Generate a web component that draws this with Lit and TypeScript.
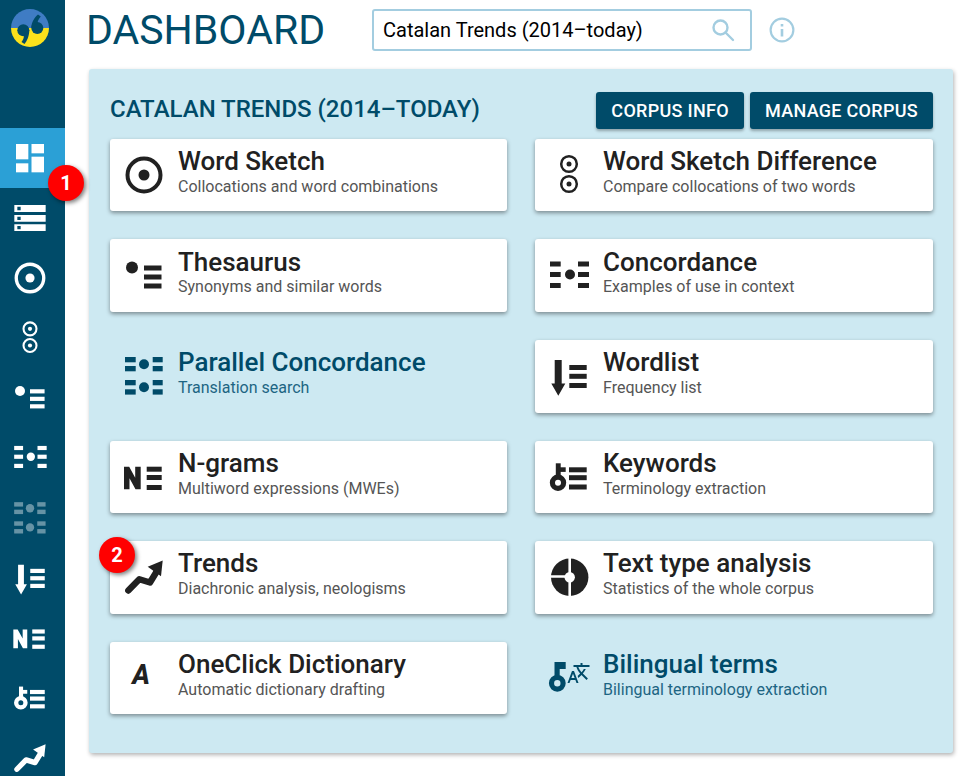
import { LitElement, css, html, svg } from 'lit'
import { customElement } from 'lit/decorators.js'

// icons are all drawn on a 48 box, card size 48px, sidebar 40px
const bars = (x: number, w: number, ys: number[], h = 5) =>
  ys.map((y) => svg`<rect x=${x} y=${y} width=${w} height=${h}></rect>`)

const key = svg`
  <circle cx="13" cy="29.7" r="5.6" fill="none" stroke="currentColor" stroke-width="5.2"></circle>
  <rect x="10.8" y="10.3" width="4.9" height="15"></rect>
  <rect x="15" y="14.3" width="5.7" height="4.6"></rect>`

const ICONS: Record<string, unknown> = {
  dashboard: svg`
    <rect x="7.2" y="7.2" width="14.8" height="18.4"></rect>
    <rect x="25.8" y="7.2" width="15" height="11.2"></rect>
    <rect x="7.2" y="30.4" width="14.8" height="10.8"></rect>
    <rect x="25.8" y="22.4" width="15" height="18.8"></rect>`,
  corpus: svg`
    <path fill-rule="evenodd" d="M5.2 8.4h37.6v8.4H5.2zM8.8 10.6v4h4v-4zM5.2 20.4h37.6v8H5.2zM8.8 22.4v4h4v-4zM5.2 31.6h37.6v8H5.2zM8.8 33.6v4h4v-4z"></path>`,
  wordsketch: svg`
    <circle cx="24" cy="24" r="16.5" fill="none" stroke="currentColor" stroke-width="4"></circle>
    <circle cx="24" cy="24" r="5.5"></circle>`,
  wsdiff: svg`
    <circle cx="24" cy="13" r="7.8" fill="none" stroke="currentColor" stroke-width="2.5"></circle>
    <circle cx="24" cy="13" r="2.5"></circle>
    <circle cx="24" cy="33" r="7.8" fill="none" stroke="currentColor" stroke-width="2.5"></circle>
    <circle cx="24" cy="33" r="2.5"></circle>`,
  thesaurus: svg`
    <circle cx="12" cy="15.5" r="6"></circle>
    ${bars(24, 17.5, [13.5, 22.5, 31.5])}`,
  concordance: svg`
    ${bars(5, 10.7, [9.5, 20, 31])}
    <circle cx="25" cy="22.5" r="5"></circle>
    ${bars(33, 11, [9.5, 20, 31])}`,
  parallel: svg`
    ${bars(5, 10.7, [5, 14, 28, 37.3], 5.3)}
    <circle cx="24" cy="12.3" r="5"></circle>
    <circle cx="24" cy="35.3" r="5"></circle>
    ${bars(32.7, 10, [5, 14, 28, 37.3], 5.3)}`,
  wordlist: svg`
    <path d="M9.7 8h7v23.5h3.6l-7 12.2-7-12.2h3.4z"></path>
    ${bars(24.3, 17.4, [13, 21.8, 31])}`,
  ngrams: svg`
    <path d="M4 13.7h5.2l6 11v-11h5.5v22.6h-5.2l-6-11v11H4z"></path>
    ${bars(26.7, 15, [13.7, 22, 32])}`,
  keywords: svg`
    ${key}
    ${bars(24, 17.7, [14.3, 22.2, 31.5], 5)}`,
  trends: svg`
    <path d="M8.3 37.5 19.3 26.3 30 29.5 37 18" fill="none" stroke="currentColor" stroke-width="6.4" stroke-linecap="round" stroke-linejoin="round"></path>
    <path d="M27.7 13.8 42.7 7.5 41 23.2z"></path>`,
  texttype: svg`
    <circle cx="24.7" cy="24.2" r="18.7"></circle>
    <path d="M24.7 4v40.5M5 23.5h17" fill="none" stroke="#fff" stroke-width="2.6"></path>
    <circle cx="24.7" cy="24.2" r="5.2" fill="#fff"></circle>`,
  oneclick: svg`<text x="21" y="30" text-anchor="middle" font-family="Roboto" font-size="27" font-weight="800" font-style="italic">A</text>`,
  bilingual: svg`
    <circle cx="12.3" cy="29.3" r="5.8" fill="none" stroke="currentColor" stroke-width="5.2"></circle>
    <rect x="9.5" y="8" width="5.2" height="17"></rect>
    <rect x="14" y="8" width="6.7" height="7"></rect>
    <g transform="translate(45.5 7) scale(-1 1)"><path d="M12.87 15.07l-2.54-2.51.03-.03c1.74-1.94 2.98-4.17 3.71-6.53H17V4h-7V2H8v2H1v1.99h11.17C11.5 7.92 10.44 9.75 9 11.35 8.07 10.32 7.3 9.19 6.69 8h-2c.73 1.63 1.73 3.17 2.98 4.56l-5.09 5.02L4 19l5-5 3.11 3.11.76-2.04zM18.5 10h-2L12 22h2l1.12-3h4.75L21 22h2l-4.5-12zm-2.62 7l1.62-4.33L19.12 17h-3.24z"></path></g>`,
}

const icon = (name: string) =>
  html`<svg class="icon" viewBox="0 0 48 48" fill="currentColor">${ICONS[name]}</svg>`

const SIDE = ['dashboard', 'corpus', 'wordsketch', 'wsdiff', 'thesaurus', 'concordance', 'parallel', 'wordlist', 'ngrams', 'keywords', 'trends']

const CARDS = [
  { icon: 'wordsketch', title: 'Word Sketch', sub: 'Collocations and word combinations' },
  { icon: 'wsdiff', title: 'Word Sketch Difference', sub: 'Compare collocations of two words' },
  { icon: 'thesaurus', title: 'Thesaurus', sub: 'Synonyms and similar words' },
  { icon: 'concordance', title: 'Concordance', sub: 'Examples of use in context' },
  { icon: 'parallel', title: 'Parallel Concordance', sub: 'Translation search', off: true },
  { icon: 'wordlist', title: 'Wordlist', sub: 'Frequency list' },
  { icon: 'ngrams', title: 'N-grams', sub: 'Multiword expressions (MWEs)' },
  { icon: 'keywords', title: 'Keywords', sub: 'Terminology extraction' },
  { icon: 'trends', title: 'Trends', sub: 'Diachronic analysis, neologisms', badge: '2' },
  { icon: 'texttype', title: 'Text type analysis', sub: 'Statistics of the whole corpus' },
  { icon: 'oneclick', title: 'OneClick Dictionary', sub: 'Automatic dictionary drafting' },
  { icon: 'bilingual', title: 'Bilingual terms', sub: 'Bilingual terminology extraction', off: true },
]

@customElement('app-root')
export class AppRoot extends LitElement {
  static styles = css`
    :host {
      display: grid;
      grid-template-columns: 65px 1fr;
      height: 776px;
      overflow: hidden;
      background: #fff;
      font-family: Roboto, sans-serif;
      color: #212121;
    }
    .side {
      position: relative;
      z-index: 1;
      background: #004b69;
      color: #fff;
    }
    .logo {
      display: block;
      width: 38px;
      height: 38px;
      margin: 9px 0 81px 11px;
    }
    .nav {
      position: relative;
      display: flex;
      align-items: center;
      justify-content: center;
      height: 60px;
      padding-right: 5px;
    }
    .nav .icon {
      width: 40px;
      height: 40px;
    }
    .nav.on {
      background: #2ba0d6;
    }
    .nav.faded .icon {
      opacity: 0.4;
    }
    .main {
      padding: 0 16px 0 24px;
      min-width: 0;
    }
    .top {
      display: flex;
      align-items: center;
      height: 60px;
      margin-bottom: 9px;
    }
    h1 {
      flex: none;
      width: 286px;
      margin: 0 0 0 -3px;
      font-size: 41px;
      font-weight: 400;
      color: #004b69;
      white-space: nowrap;
    }
    .search {
      display: flex;
      align-items: center;
      justify-content: space-between;
      box-sizing: border-box;
      width: 380px;
      height: 42px;
      padding: 0 15px 0 9px;
      border: 2px solid #a3cde0;
      border-radius: 3px;
      font-size: 20px;
      color: #000;
    }
    .search svg {
      width: 24px;
      height: 24px;
      color: #a3cde0;
    }
    .info {
      width: 26px;
      height: 26px;
      margin-left: 17px;
      color: #a3cde0;
    }
    .panel {
      box-sizing: border-box;
      height: 684px;
      padding: 23px 20px 0 21px;
      background: #cde9f2;
      border-radius: 3px;
      box-shadow: 1px 2px 4px rgba(0, 0, 0, 0.3);
    }
    .head {
      display: flex;
      align-items: center;
      height: 37px;
      margin-bottom: 9.8px;
    }
    h2 {
      flex: 1;
      margin: 0 0 4px;
      font-size: 24px;
      font-weight: 500;
      color: #004b69;
      white-space: nowrap;
    }
    .btn {
      display: flex;
      align-items: center;
      height: 37px;
      margin-left: 6px;
      padding: 0 15px;
      background: #004b69;
      color: #fff;
      border-radius: 3px;
      font-size: 18px;
      font-weight: 500;
      letter-spacing: 0.3px;
      box-shadow: 0 2px 3px rgba(0, 0, 0, 0.3);
    }
    .grid {
      display: grid;
      grid-template-columns: 397px 398px;
      grid-auto-rows: 72.6px;
      column-gap: 28px;
      row-gap: 28px;
    }
    .card {
      position: relative;
      display: flex;
      align-items: center;
      background: #fff;
      border-radius: 3px;
      box-shadow: 0 2px 4px rgba(0, 0, 0, 0.4);
    }
    .card.off {
      background: none;
      box-shadow: none;
      color: #004b69;
    }
    .card .icon {
      flex: none;
      width: 48px;
      height: 48px;
      margin: 0 10px 0 10px;
    }
    .text {
      padding-bottom: 7.4px;
    }
    .name {
      font-size: 26px;
      font-weight: 500;
      line-height: 30px;
      white-space: nowrap;
    }
    .sub {
      margin-top: 0.8px;
      font-size: 16px;
      line-height: 20px;
      color: #555;
      white-space: nowrap;
    }
    .off .sub {
      color: #1d6583;
    }
    .badge {
      position: absolute;
      display: flex;
      align-items: center;
      justify-content: center;
      width: 36px;
      height: 36px;
      border-radius: 50%;
      background: #f00;
      color: #fff;
      font-size: 20px;
      font-weight: 700;
      box-shadow: 2px 2px 4px rgba(0, 0, 0, 0.5);
      z-index: 2;
    }
    .nav .badge {
      left: 48px;
      top: 37px;
    }
    .card .badge {
      left: -11px;
      top: -4px;
    }
  `

  render() {
    return html`
      <div class="side">
        <svg class="logo" viewBox="0 0 38 38">
          <path d="M0 19a19 19 0 0 1 38 0z" fill="#3f7cc4"></path>
          <path d="M0 19a19 19 0 0 0 38 0z" fill="#fbe11c"></path>
          <g fill="#004b69">
            <circle cx="12.3" cy="21.3" r="6"></circle>
            <path d="M18.3 21C18.3 27 16 32 13.5 35L10.5 33C12 31 13 29 13 26z"></path>
            <circle cx="26.3" cy="19" r="6"></circle>
            <path d="M20.3 19C20.3 13 24 8 27 5.5L29.8 7.5C28 9.5 27 11 26.5 14z"></path>
          </g>
        </svg>
        ${SIDE.map(
          (name, i) => html`
            <div class="nav ${i === 0 ? 'on' : ''} ${name === 'parallel' ? 'faded' : ''}">
              ${icon(name)}
              ${i === 0 ? html`<span class="badge">1</span>` : null}
            </div>
          `
        )}
      </div>
      <div class="main">
        <div class="top">
          <h1>DASHBOARD</h1>
          <div class="search">
            Catalan Trends (2014–today)
            <svg viewBox="0 0 24 24" fill="none" stroke="currentColor" stroke-width="2.4">
              <circle cx="9.5" cy="9.5" r="7"></circle>
              <path d="M14.5 14.5 22 22" stroke-linecap="round"></path>
            </svg>
          </div>
          <svg class="info" viewBox="0 0 24 24" fill="none" stroke="currentColor" stroke-width="2">
            <circle cx="12" cy="12" r="10.5"></circle>
            <path d="M12 11v7M12 6.5v2.2" stroke-width="2.4"></path>
          </svg>
        </div>
        <div class="panel">
          <div class="head">
            <h2>CATALAN TRENDS (2014–TODAY)</h2>
            <div class="btn">CORPUS INFO</div>
            <div class="btn">MANAGE CORPUS</div>
          </div>
          <div class="grid">
            ${CARDS.map(
              (c) => html`
                <div class="card ${c.off ? 'off' : ''}">
                  ${c.badge ? html`<span class="badge">${c.badge}</span>` : null}
                  ${icon(c.icon)}
                  <div class="text">
                    <div class="name">${c.title}</div>
                    <div class="sub">${c.sub}</div>
                  </div>
                </div>
              `
            )}
          </div>
        </div>
      </div>
    `
  }
}
